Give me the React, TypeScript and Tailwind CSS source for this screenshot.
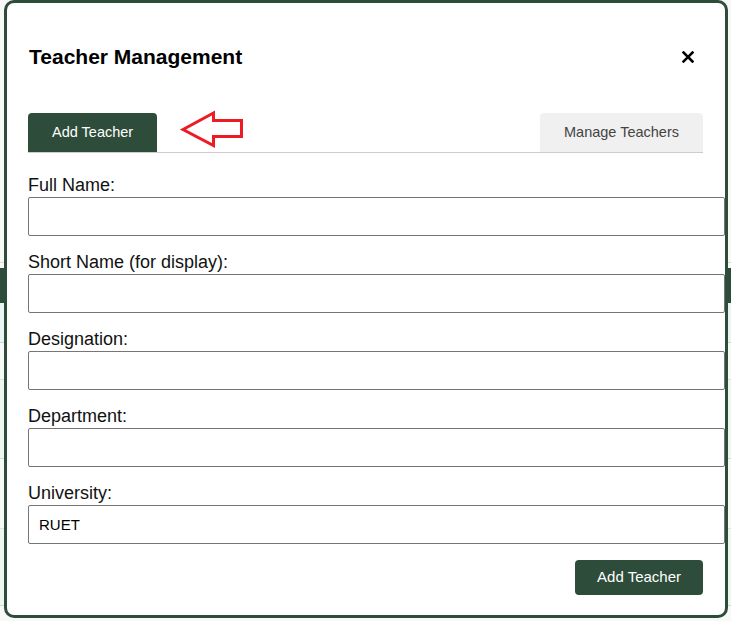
import { useState } from 'react';

const fields = [
  { id: 'fullName', label: 'Full Name:', value: '' },
  { id: 'shortName', label: 'Short Name (for display):', value: '' },
  { id: 'designation', label: 'Designation:', value: '' },
  { id: 'department', label: 'Department:', value: '' },
  { id: 'university', label: 'University:', value: 'RUET' },
];

export default function App() {
  const [tab, setTab] = useState<'add' | 'manage'>('add');
  const [values, setValues] = useState<Record<string, string>>(
    Object.fromEntries(fields.map((f) => [f.id, f.value]))
  );

  return (
    <div className="relative w-[731px] h-[621px] overflow-hidden bg-[#f7f9f8] font-['Liberation_Sans',Arial,sans-serif]">
      {/* Page behind the dialog */}
      <div className="flex flex-col">
        <div className="h-[263px] border-b border-[#d8dcd9]" />
        <div className="h-[5px]" />
        <div className="h-[35px] bg-[#2d4c3a]" />
        <div className="h-[40px] bg-[#e9f5f2] border-b border-[#cfd6d2]" />
        <div className="h-[37px] border-b border-[#dde2df]" />
        <div className="h-[79px] bg-[#eef6f1] border-b border-[#d3dad6]" />
        <div className="h-[70px] border-b border-[#dde2df]" />
        <div className="h-[77px] bg-[#eef6f1] border-b border-[#d3dad6]" />
      </div>

      {/* Dialog */}
      <div className="absolute left-[4px] top-0 w-[724px] h-[618px] bg-white border-[3px] border-[#2d4c3a] rounded-[10px] pt-[21px] pl-[21px] pr-[22px]">
        <div className="flex items-center justify-between h-[66px]">
          <h2 className="text-[21px] font-bold text-black pl-px">Teacher Management</h2>
          <button className="w-[30px] h-[30px] flex items-center justify-center text-black">
            <svg width="12" height="12" viewBox="0 0 12 12">
              <path d="M1.5 1.5 L10.5 10.5 M10.5 1.5 L1.5 10.5" stroke="#000" strokeWidth="2.5" strokeLinecap="square" />
            </svg>
          </button>
        </div>

        <div className="mt-[23px] flex justify-between border-b border-[#cccccc]">
          <button
            onClick={() => setTab('add')}
            className={`h-[39px] px-[24px] pt-px rounded-t-[4px] text-[14.5px] ${
              tab === 'add' ? 'bg-[#2d4c3a] text-white' : 'bg-[#f0f0f0] text-[#444]'
            }`}
          >
            Add Teacher
          </button>
          <button
            onClick={() => setTab('manage')}
            className={`h-[39px] px-[24px] pt-px rounded-t-[4px] text-[14.5px] ${
              tab === 'manage' ? 'bg-[#2d4c3a] text-white' : 'bg-[#f0f0f0] text-[#444]'
            }`}
          >
            Manage Teachers
          </button>
        </div>

        <form className="mt-[22px] flex flex-col gap-[16px]" onSubmit={(e) => e.preventDefault()}>
          {fields.map((f) => (
            <div key={f.id}>
              <label htmlFor={f.id} className="block text-[18px] leading-[20px] mb-[2px] text-[#111]">
                {f.label}
              </label>
              <input
                id={f.id}
                value={values[f.id]}
                onChange={(e) => setValues({ ...values, [f.id]: e.target.value })}
                className="box-content block w-full h-[17px] px-[10px] py-[10px] text-[15px] leading-[17px] text-black border border-[#767676] rounded-[2px] bg-white"
              />
            </div>
          ))}
          <div className="flex justify-end">
            <button className="h-[35px] px-[22px] rounded-[4px] bg-[#2d4c3a] text-white text-[15px]">
              Add Teacher
            </button>
          </div>
        </form>
      </div>

      {/* Annotation arrow */}
      <svg className="absolute left-[178px] top-[108px]" width="70" height="44" viewBox="178 108 70 44">
        <polygon
          points="183,129.5 213.5,113 213.5,120.5 241.5,120.5 241.5,136.5 213.5,136.5 213.5,145.5"
          fill="none"
          stroke="#ed1c24"
          strokeWidth="3"
          strokeLinejoin="miter"
        />
      </svg>
    </div>
  );
}
